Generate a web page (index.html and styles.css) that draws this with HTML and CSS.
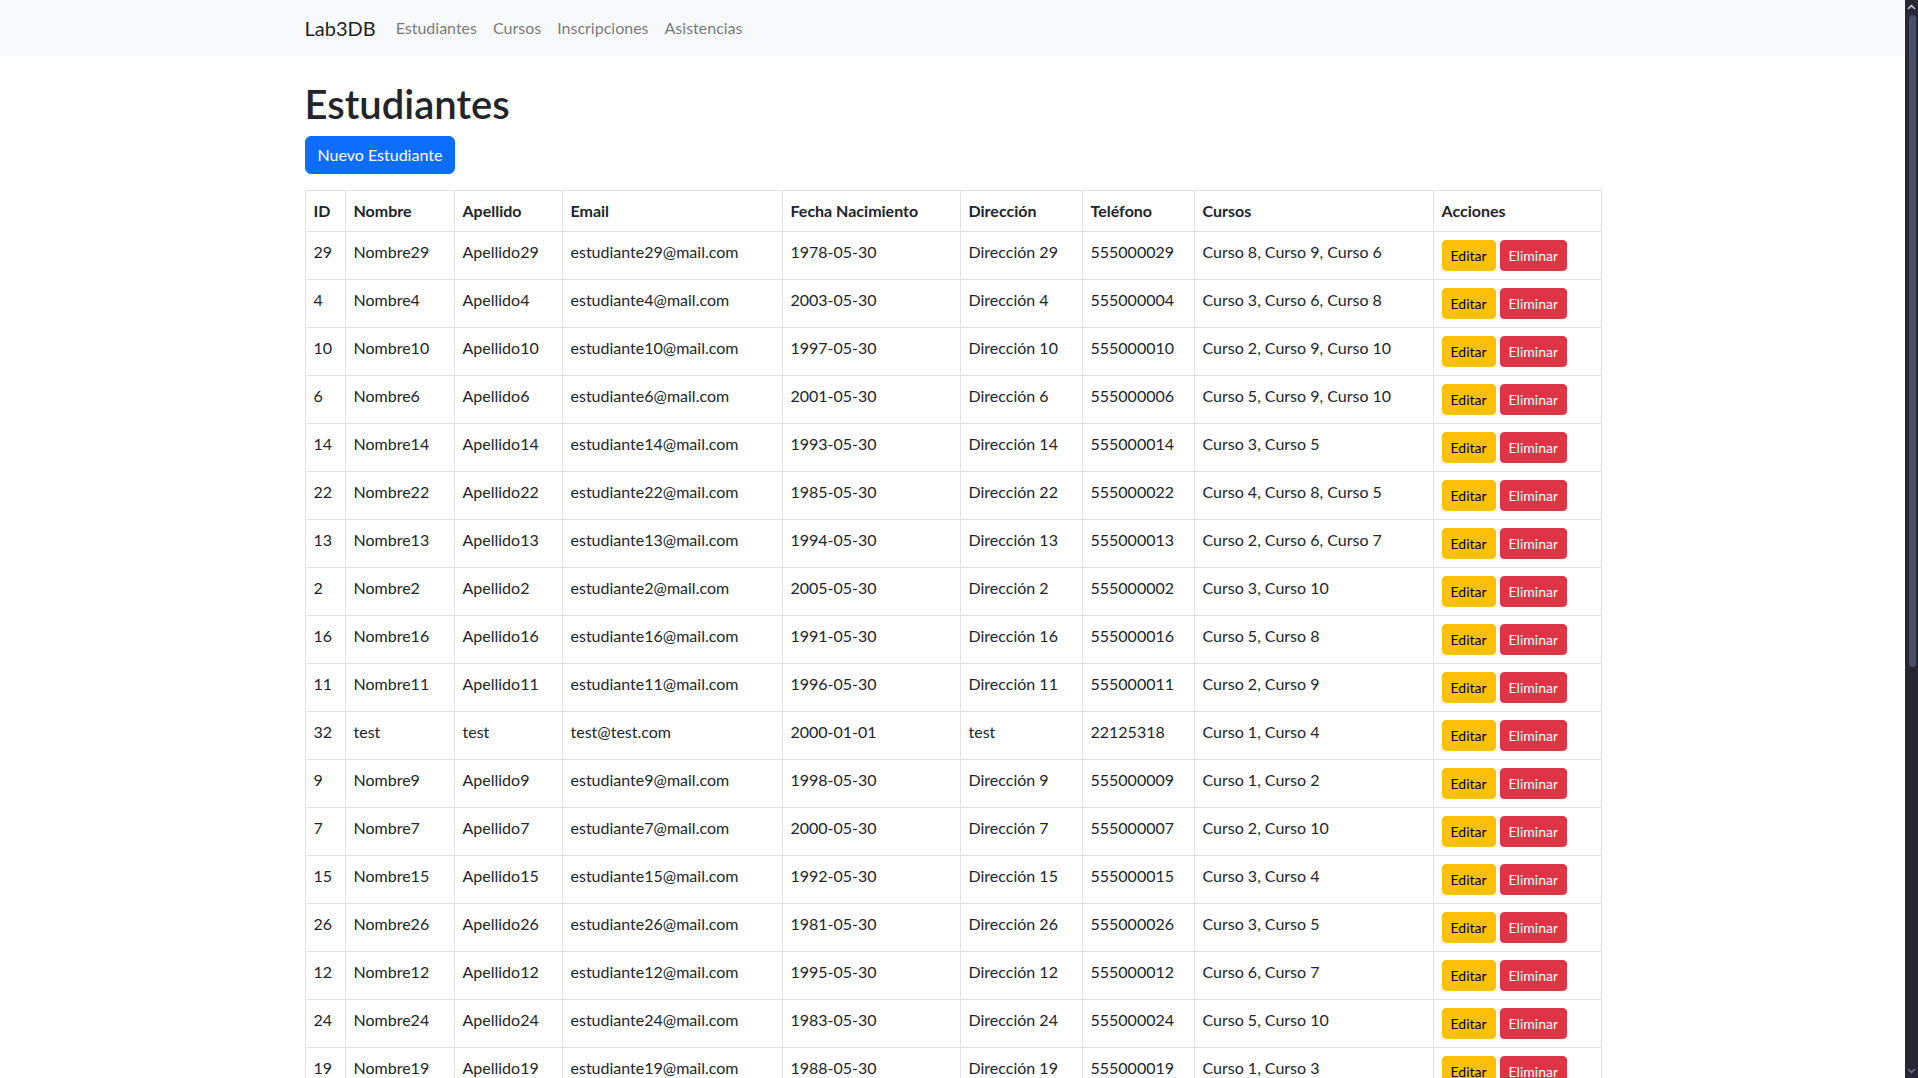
FILE: index.html
```html
<!DOCTYPE html>
<html lang="es">
<head>
<meta charset="utf-8">
<title>Estudiantes - Lab3DB</title>
<link rel="stylesheet" href="styles.css">
</head>
<body>
<div class="page">
<nav class="navbar">
  <div class="container nav-inner">
    <a class="brand" href="#">Lab3DB</a>
    <ul class="nav-links">
      <li><a class="nav-link" href="#">Estudiantes</a></li>
      <li><a class="nav-link" href="#">Cursos</a></li>
      <li><a class="nav-link" href="#">Inscripciones</a></li>
      <li><a class="nav-link" href="#">Asistencias</a></li>
    </ul>
  </div>
</nav>
<main class="container main">
  <h1 class="title">Estudiantes</h1>
  <a class="btn btn-primary" href="#">Nuevo Estudiante</a>
  <table class="table">
    <colgroup>
      <col class="c-id"><col class="c-nombre"><col class="c-apellido"><col class="c-email"><col class="c-fecha"><col class="c-dir"><col class="c-tel"><col class="c-cursos"><col class="c-acc">
    </colgroup>
    <thead>
      <tr><th>ID</th><th>Nombre</th><th>Apellido</th><th>Email</th><th>Fecha Nacimiento</th><th>Dirección</th><th>Teléfono</th><th>Cursos</th><th>Acciones</th></tr>
    </thead>
    <tbody>
      <tr><td>29</td><td>Nombre29</td><td>Apellido29</td><td>estudiante29@mail.com</td><td>1978-05-30</td><td>Dirección 29</td><td>555000029</td><td>Curso 8, Curso 9, Curso 6</td><td class="acc"><a class="btn-sm warn" href="#">Editar</a><a class="btn-sm danger" href="#">Eliminar</a></td></tr>
      <tr><td>4</td><td>Nombre4</td><td>Apellido4</td><td>estudiante4@mail.com</td><td>2003-05-30</td><td>Dirección 4</td><td>555000004</td><td>Curso 3, Curso 6, Curso 8</td><td class="acc"><a class="btn-sm warn" href="#">Editar</a><a class="btn-sm danger" href="#">Eliminar</a></td></tr>
      <tr><td>10</td><td>Nombre10</td><td>Apellido10</td><td>estudiante10@mail.com</td><td>1997-05-30</td><td>Dirección 10</td><td>555000010</td><td>Curso 2, Curso 9, Curso 10</td><td class="acc"><a class="btn-sm warn" href="#">Editar</a><a class="btn-sm danger" href="#">Eliminar</a></td></tr>
      <tr><td>6</td><td>Nombre6</td><td>Apellido6</td><td>estudiante6@mail.com</td><td>2001-05-30</td><td>Dirección 6</td><td>555000006</td><td>Curso 5, Curso 9, Curso 10</td><td class="acc"><a class="btn-sm warn" href="#">Editar</a><a class="btn-sm danger" href="#">Eliminar</a></td></tr>
      <tr><td>14</td><td>Nombre14</td><td>Apellido14</td><td>estudiante14@mail.com</td><td>1993-05-30</td><td>Dirección 14</td><td>555000014</td><td>Curso 3, Curso 5</td><td class="acc"><a class="btn-sm warn" href="#">Editar</a><a class="btn-sm danger" href="#">Eliminar</a></td></tr>
      <tr><td>22</td><td>Nombre22</td><td>Apellido22</td><td>estudiante22@mail.com</td><td>1985-05-30</td><td>Dirección 22</td><td>555000022</td><td>Curso 4, Curso 8, Curso 5</td><td class="acc"><a class="btn-sm warn" href="#">Editar</a><a class="btn-sm danger" href="#">Eliminar</a></td></tr>
      <tr><td>13</td><td>Nombre13</td><td>Apellido13</td><td>estudiante13@mail.com</td><td>1994-05-30</td><td>Dirección 13</td><td>555000013</td><td>Curso 2, Curso 6, Curso 7</td><td class="acc"><a class="btn-sm warn" href="#">Editar</a><a class="btn-sm danger" href="#">Eliminar</a></td></tr>
      <tr><td>2</td><td>Nombre2</td><td>Apellido2</td><td>estudiante2@mail.com</td><td>2005-05-30</td><td>Dirección 2</td><td>555000002</td><td>Curso 3, Curso 10</td><td class="acc"><a class="btn-sm warn" href="#">Editar</a><a class="btn-sm danger" href="#">Eliminar</a></td></tr>
      <tr><td>16</td><td>Nombre16</td><td>Apellido16</td><td>estudiante16@mail.com</td><td>1991-05-30</td><td>Dirección 16</td><td>555000016</td><td>Curso 5, Curso 8</td><td class="acc"><a class="btn-sm warn" href="#">Editar</a><a class="btn-sm danger" href="#">Eliminar</a></td></tr>
      <tr><td>11</td><td>Nombre11</td><td>Apellido11</td><td>estudiante11@mail.com</td><td>1996-05-30</td><td>Dirección 11</td><td>555000011</td><td>Curso 2, Curso 9</td><td class="acc"><a class="btn-sm warn" href="#">Editar</a><a class="btn-sm danger" href="#">Eliminar</a></td></tr>
      <tr><td>32</td><td>test</td><td>test</td><td>test@test.com</td><td>2000-01-01</td><td>test</td><td>22125318</td><td>Curso 1, Curso 4</td><td class="acc"><a class="btn-sm warn" href="#">Editar</a><a class="btn-sm danger" href="#">Eliminar</a></td></tr>
      <tr><td>9</td><td>Nombre9</td><td>Apellido9</td><td>estudiante9@mail.com</td><td>1998-05-30</td><td>Dirección 9</td><td>555000009</td><td>Curso 1, Curso 2</td><td class="acc"><a class="btn-sm warn" href="#">Editar</a><a class="btn-sm danger" href="#">Eliminar</a></td></tr>
      <tr><td>7</td><td>Nombre7</td><td>Apellido7</td><td>estudiante7@mail.com</td><td>2000-05-30</td><td>Dirección 7</td><td>555000007</td><td>Curso 2, Curso 10</td><td class="acc"><a class="btn-sm warn" href="#">Editar</a><a class="btn-sm danger" href="#">Eliminar</a></td></tr>
      <tr><td>15</td><td>Nombre15</td><td>Apellido15</td><td>estudiante15@mail.com</td><td>1992-05-30</td><td>Dirección 15</td><td>555000015</td><td>Curso 3, Curso 4</td><td class="acc"><a class="btn-sm warn" href="#">Editar</a><a class="btn-sm danger" href="#">Eliminar</a></td></tr>
      <tr><td>26</td><td>Nombre26</td><td>Apellido26</td><td>estudiante26@mail.com</td><td>1981-05-30</td><td>Dirección 26</td><td>555000026</td><td>Curso 3, Curso 5</td><td class="acc"><a class="btn-sm warn" href="#">Editar</a><a class="btn-sm danger" href="#">Eliminar</a></td></tr>
      <tr><td>12</td><td>Nombre12</td><td>Apellido12</td><td>estudiante12@mail.com</td><td>1995-05-30</td><td>Dirección 12</td><td>555000012</td><td>Curso 6, Curso 7</td><td class="acc"><a class="btn-sm warn" href="#">Editar</a><a class="btn-sm danger" href="#">Eliminar</a></td></tr>
      <tr><td>24</td><td>Nombre24</td><td>Apellido24</td><td>estudiante24@mail.com</td><td>1983-05-30</td><td>Dirección 24</td><td>555000024</td><td>Curso 5, Curso 10</td><td class="acc"><a class="btn-sm warn" href="#">Editar</a><a class="btn-sm danger" href="#">Eliminar</a></td></tr>
      <tr><td>19</td><td>Nombre19</td><td>Apellido19</td><td>estudiante19@mail.com</td><td>1988-05-30</td><td>Dirección 19</td><td>555000019</td><td>Curso 1, Curso 3</td><td class="acc"><a class="btn-sm warn" href="#">Editar</a><a class="btn-sm danger" href="#">Eliminar</a></td></tr>
      <tr><td>1</td><td>Nombre1</td><td>Apellido1</td><td>estudiante1@mail.com</td><td>2006-05-30</td><td>Dirección 1</td><td>555000001</td><td>Curso 4, Curso 7</td><td class="acc"><a class="btn-sm warn" href="#">Editar</a><a class="btn-sm danger" href="#">Eliminar</a></td></tr>
      <tr><td>3</td><td>Nombre3</td><td>Apellido3</td><td>estudiante3@mail.com</td><td>2004-05-30</td><td>Dirección 3</td><td>555000003</td><td>Curso 1, Curso 6, Curso 9</td><td class="acc"><a class="btn-sm warn" href="#">Editar</a><a class="btn-sm danger" href="#">Eliminar</a></td></tr>
      <tr><td>5</td><td>Nombre5</td><td>Apellido5</td><td>estudiante5@mail.com</td><td>2002-05-30</td><td>Dirección 5</td><td>555000005</td><td>Curso 2, Curso 8</td><td class="acc"><a class="btn-sm warn" href="#">Editar</a><a class="btn-sm danger" href="#">Eliminar</a></td></tr>
      <tr><td>8</td><td>Nombre8</td><td>Apellido8</td><td>estudiante8@mail.com</td><td>1999-05-30</td><td>Dirección 8</td><td>555000008</td><td>Curso 4, Curso 10</td><td class="acc"><a class="btn-sm warn" href="#">Editar</a><a class="btn-sm danger" href="#">Eliminar</a></td></tr>
      <tr><td>17</td><td>Nombre17</td><td>Apellido17</td><td>estudiante17@mail.com</td><td>1990-05-30</td><td>Dirección 17</td><td>555000017</td><td>Curso 3, Curso 7, Curso 9</td><td class="acc"><a class="btn-sm warn" href="#">Editar</a><a class="btn-sm danger" href="#">Eliminar</a></td></tr>
      <tr><td>18</td><td>Nombre18</td><td>Apellido18</td><td>estudiante18@mail.com</td><td>1989-05-30</td><td>Dirección 18</td><td>555000018</td><td>Curso 1, Curso 5</td><td class="acc"><a class="btn-sm warn" href="#">Editar</a><a class="btn-sm danger" href="#">Eliminar</a></td></tr>
      <tr><td>20</td><td>Nombre20</td><td>Apellido20</td><td>estudiante20@mail.com</td><td>1987-05-30</td><td>Dirección 20</td><td>555000020</td><td>Curso 6, Curso 8</td><td class="acc"><a class="btn-sm warn" href="#">Editar</a><a class="btn-sm danger" href="#">Eliminar</a></td></tr>
      <tr><td>21</td><td>Nombre21</td><td>Apellido21</td><td>estudiante21@mail.com</td><td>1986-05-30</td><td>Dirección 21</td><td>555000021</td><td>Curso 2, Curso 4, Curso 5</td><td class="acc"><a class="btn-sm warn" href="#">Editar</a><a class="btn-sm danger" href="#">Eliminar</a></td></tr>
      <tr><td>23</td><td>Nombre23</td><td>Apellido23</td><td>estudiante23@mail.com</td><td>1984-05-30</td><td>Dirección 23</td><td>555000023</td><td>Curso 7, Curso 10</td><td class="acc"><a class="btn-sm warn" href="#">Editar</a><a class="btn-sm danger" href="#">Eliminar</a></td></tr>
      <tr><td>25</td><td>Nombre25</td><td>Apellido25</td><td>estudiante25@mail.com</td><td>1982-05-30</td><td>Dirección 25</td><td>555000025</td><td>Curso 1, Curso 9</td><td class="acc"><a class="btn-sm warn" href="#">Editar</a><a class="btn-sm danger" href="#">Eliminar</a></td></tr>
      <tr><td>27</td><td>Nombre27</td><td>Apellido27</td><td>estudiante27@mail.com</td><td>1980-05-30</td><td>Dirección 27</td><td>555000027</td><td>Curso 3, Curso 8</td><td class="acc"><a class="btn-sm warn" href="#">Editar</a><a class="btn-sm danger" href="#">Eliminar</a></td></tr>
      <tr><td>28</td><td>Nombre28</td><td>Apellido28</td><td>estudiante28@mail.com</td><td>1979-05-30</td><td>Dirección 28</td><td>555000028</td><td>Curso 5, Curso 6, Curso 7</td><td class="acc"><a class="btn-sm warn" href="#">Editar</a><a class="btn-sm danger" href="#">Eliminar</a></td></tr>
      <tr><td>30</td><td>Nombre30</td><td>Apellido30</td><td>estudiante30@mail.com</td><td>1977-05-30</td><td>Dirección 30</td><td>555000030</td><td>Curso 2, Curso 3</td><td class="acc"><a class="btn-sm warn" href="#">Editar</a><a class="btn-sm danger" href="#">Eliminar</a></td></tr>
    </tbody>
  </table>
</main>
</div>
<div class="scrollbar" aria-hidden="true">
  <svg class="sb-arrow sb-up" width="13" height="14" viewBox="0 0 13 14"><path d="M3.5 8.5 L6.5 5.5 L9.5 8.5" fill="none" stroke="#c9cbd6" stroke-width="1.6" stroke-linecap="round" stroke-linejoin="round"/></svg>
  <div class="sb-track"><div class="sb-thumb"></div></div>
  <svg class="sb-arrow sb-down" width="13" height="14" viewBox="0 0 13 14"><path d="M3.5 5.5 L6.5 8.5 L9.5 5.5" fill="none" stroke="#6f7285" stroke-width="1.6" stroke-linecap="round" stroke-linejoin="round"/></svg>
</div>
</body>
</html>
```

FILE: styles.css
```css
* {
  box-sizing: border-box;
}

body {
  margin: 0;
  font-family: Lato, "Noto Sans", "Liberation Sans", sans-serif;
  font-size: 16px;
  line-height: 1.5;
  color: #212529;
  background: #fff;
}

a {
  text-decoration: none;
}

.page {
  margin-right: 13px;
}

/* fake OS scrollbar drawn over the right edge */
.scrollbar {
  position: fixed;
  top: 0;
  right: 0;
  width: 13px;
  height: 100vh;
  background: #252833;
  display: flex;
  flex-direction: column;
}

.sb-arrow {
  display: block;
  flex: none;
}

.sb-track {
  flex: 1;
  padding: 1px 2px 0 4px;
}

.sb-thumb {
  width: 7px;
  height: 652px;
  background: #4a4d66;
  border-radius: 4px;
}

.container {
  width: 100%;
  max-width: 1320px;
  margin: 0 auto;
  padding: 0 12px;
}

.navbar {
  background: #f8f9fa;
  padding: 8px 0;
}

.nav-inner {
  display: flex;
  align-items: center;
}

.brand {
  font-size: 20px;
  line-height: 30px;
  padding: 5px 0;
  margin-right: 12px;
  color: rgba(0, 0, 0, 0.9);
}

.nav-links {
  display: flex;
  list-style: none;
  margin: 0;
  padding: 0;
}

.nav-link {
  display: block;
  padding: 8px;
  color: rgba(0, 0, 0, 0.55);
}

.main {
  padding-top: 24px;
}

.title {
  margin: 0 0 8px;
  font-size: 40px;
  font-weight: 600;
  line-height: 1.2;
}

.btn {
  display: inline-block;
  padding: 6px 12px;
  font-size: 16px;
  line-height: 24px;
  border: 1px solid transparent;
  border-radius: 6px;
}

.btn-primary {
  background: #0d6efd;
  border-color: #0d6efd;
  color: #fff;
  margin-bottom: 16px;
}

.table {
  width: 1296px;
  table-layout: fixed;
  border-collapse: collapse;
  margin-bottom: 16px;
  vertical-align: top;
}

.c-id { width: 40px; }
.c-nombre { width: 109px; }
.c-apellido { width: 108px; }
.c-email { width: 220px; }
.c-fecha { width: 178px; }
.c-dir { width: 122px; }
.c-tel { width: 112px; }
.c-cursos { width: 239px; }
.c-acc { width: 168px; }

.table th,
.table td {
  border: 1px solid #dee2e6;
  padding: 8px;
  text-align: left;
  vertical-align: top;
  white-space: nowrap;
}

.table th {
  font-weight: 700;
}

.acc {
  font-size: 0;
}

.btn-sm {
  display: inline-block;
  padding: 4px 8px;
  font-size: 14px;
  line-height: 21px;
  border: 1px solid transparent;
  border-radius: 4px;
  vertical-align: top;
}

.warn {
  background: #ffc107;
  border-color: #ffc107;
  color: #000;
  margin-right: 4px;
}

.danger {
  background: #dc3545;
  border-color: #dc3545;
  color: #fff;
}
```
